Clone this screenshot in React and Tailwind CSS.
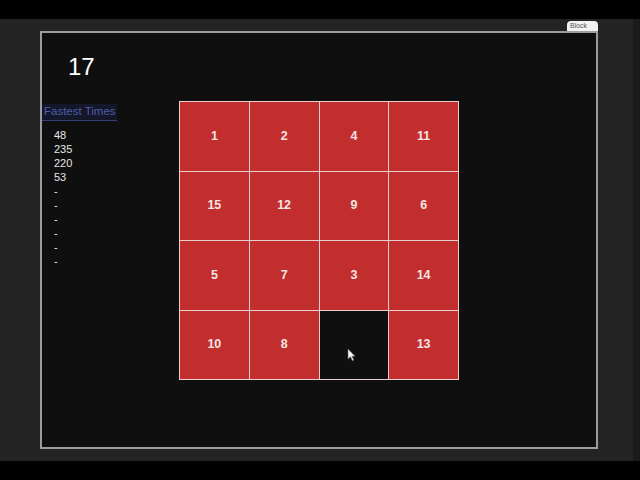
import React from "react";

const tiles = [1, 2, 4, 11, 15, 12, 9, 6, 5, 7, 3, 14, 10, 8, null, 13];
const times = ["48", "235", "220", "53", "-", "-", "-", "-", "-", "-"];

export default function App() {
  return (
    <div className="w-[640px] h-[480px] bg-black flex flex-col overflow-hidden" style={{ fontFamily: '"Liberation Sans", Arial, sans-serif' }}>
      <div className="h-[19px] shrink-0" />
      <div className="flex h-[442px] shrink-0">
        <div className="w-[633px] bg-[#232323] flex flex-col pl-[40px]">
          <div className="w-[558px] h-[12px] flex justify-end items-end">
            <div className="h-[10px] w-[31px] bg-[#f2f2f2] rounded-t-[4px] text-[7px] leading-[10px] text-[#555] pl-[3px]">Block</div>
          </div>
          <div className="w-[558px] h-[418px] border-2 border-[#9c9c9c] bg-[#0f0f0f] flex">
            <div className="w-[137px] flex flex-col">
              <div className="pl-[26px] pt-[20px] text-[24px] leading-[28px] text-white">17</div>
              <div className="mt-[23px] w-[75px] border-b border-[#34407a] bg-[#14162a] text-[11.5px] leading-[15px] text-[#4f5ea8] pl-[2px] pb-[1px]">Fastest Times</div>
              <div className="pl-[12px] pt-[7px] flex flex-col">
                {times.map((t, i) => (
                  <div key={i} className="text-[11px] leading-[14px] text-[#e6e6e6]">{t}</div>
                ))}
              </div>
            </div>
            <div className="pt-[68px]">
              <div className="w-[280px] h-[279px] grid grid-cols-4 grid-rows-4 gap-px p-px bg-[#e9cfcf]">
                {tiles.map((n, i) =>
                  n === null ? (
                    <div key={i} className="bg-[#0f0f0f] relative">
                      <svg className="absolute left-[27px] top-[37px]" width="9" height="14" viewBox="0 0 9 14">
                        <path d="M1 1 L1 11 L3.5 8.8 L5.3 12.8 L6.8 12.1 L5 8.2 L8 8.2 Z" fill="#f5f5f5" stroke="#666" strokeWidth="0.6" />
                      </svg>
                    </div>
                  ) : (
                    <div key={i} className="bg-[#c22e2d] flex items-center justify-center text-[12.5px] font-bold text-[#f4e4e4]">
                      {n}
                    </div>
                  )
                )}
              </div>
            </div>
          </div>
        </div>
        <div className="w-[7px] bg-[#1a1a1a]" />
      </div>
    </div>
  );
}
